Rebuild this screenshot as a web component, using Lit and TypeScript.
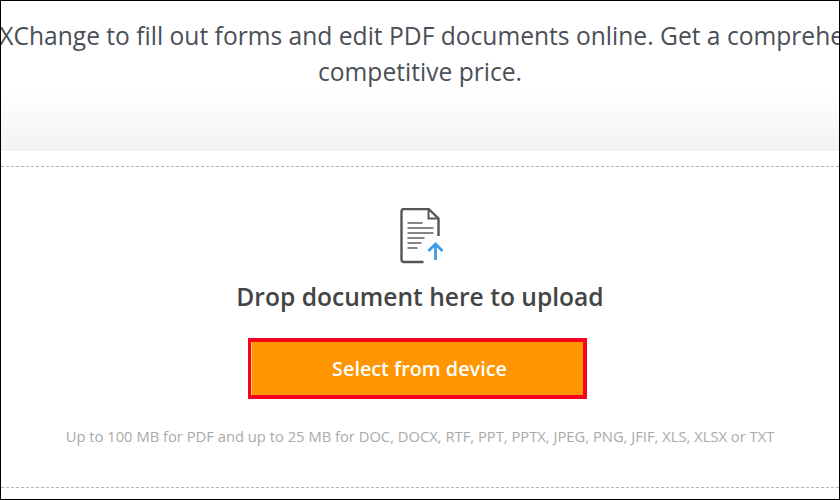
import { LitElement, html, css } from "lit";
import { customElement } from "lit/decorators.js";

@customElement("app-root")
export class AppRoot extends LitElement {
  static styles = css`
    :host { display: block; width: 840px; height: 500px; overflow: hidden; background: #fff; font-family: "Open Sans", sans-serif; }
    .frame { box-sizing: border-box; width: 840px; height: 500px; border: 1px solid #000; display: flex; flex-direction: column; overflow: hidden; }
    .intro { box-sizing: border-box; height: 150px; padding-top: 17px; flex: none; background: linear-gradient(to bottom, #fff 0, #fff 60%, #f3f3f3 100%); display: flex; justify-content: center; }
    .intro p { margin: 0; flex: none; white-space: nowrap; text-align: center; font-size: 24.6px; line-height: 35.500px; color: #4a4f57; }
    .zone { box-sizing: border-box; margin-top: 15px; height: 322px; border-top: 1px dashed #b5b5b5; border-bottom: 1px dashed #b5b5b5; display: flex; flex-direction: column; align-items: center; padding-top: 41px; }
    .icon { display: block; width: 46px; height: 58px; margin-left: 3px; }
    h2 { margin: 14px 0 0; font-size: 24.6px; line-height: 33px; font-weight: 600; color: #444; }
    .btn { box-sizing: border-box; margin: 25px 0 0 -5px; padding-left: 5px; width: 339px; height: 61px; border: 4px solid #f2051c; border-left-width: 3px; background: #ff9500; color: #fff; font: 600 19.800px "Open Sans", sans-serif; display: flex; align-items: center; justify-content: center; box-shadow: inset 1px 0 0 #ffc56f; }
    .note { margin: 27px 0 0; font-size: 14.750px; line-height: 20px; color: #aaa; white-space: nowrap; }
  `;

  render() {
    return html`
      <div class="frame">
        <div class="intro">
          <p>Use PDF-XChange to fill out forms and edit PDF documents online. Get a comprehensive set<br />competitive price.</p>
        </div>
        <div class="zone">
          <svg class="icon" viewBox="0 0 46 58" fill="none" stroke-width="2.4">
            <path d="M24.500 54H5Q2.500 54 2.500 51.500V3.500Q2.500 1 5 1H29.500L39.500 10.500V28" stroke="#555"/>
            <path d="M29.500 2V10.500H38.500" stroke="#555" stroke-width="2"/>
            <path d="M8.500 15H23.500M8.500 20H34.500M8.500 25H34.500M8.500 30H25.500M8.500 35H22.500M8.500 40H18.500" stroke="#858585" stroke-width="1.900"/>
            <path d="M36.500 52V36M29.500 43L36.500 36L43.500 43" stroke="#3d9be5" stroke-width="2.800"/>
          </svg>
          <h2>Drop document here to upload</h2>
          <div class="btn">Select from device</div>
          <p class="note">Up to 100 MB for PDF and up to 25 MB for DOC, DOCX, RTF, PPT, PPTX, JPEG, PNG, JFIF, XLS, XLSX or TXT</p>
        </div>
      </div>
    `;
  }
}
